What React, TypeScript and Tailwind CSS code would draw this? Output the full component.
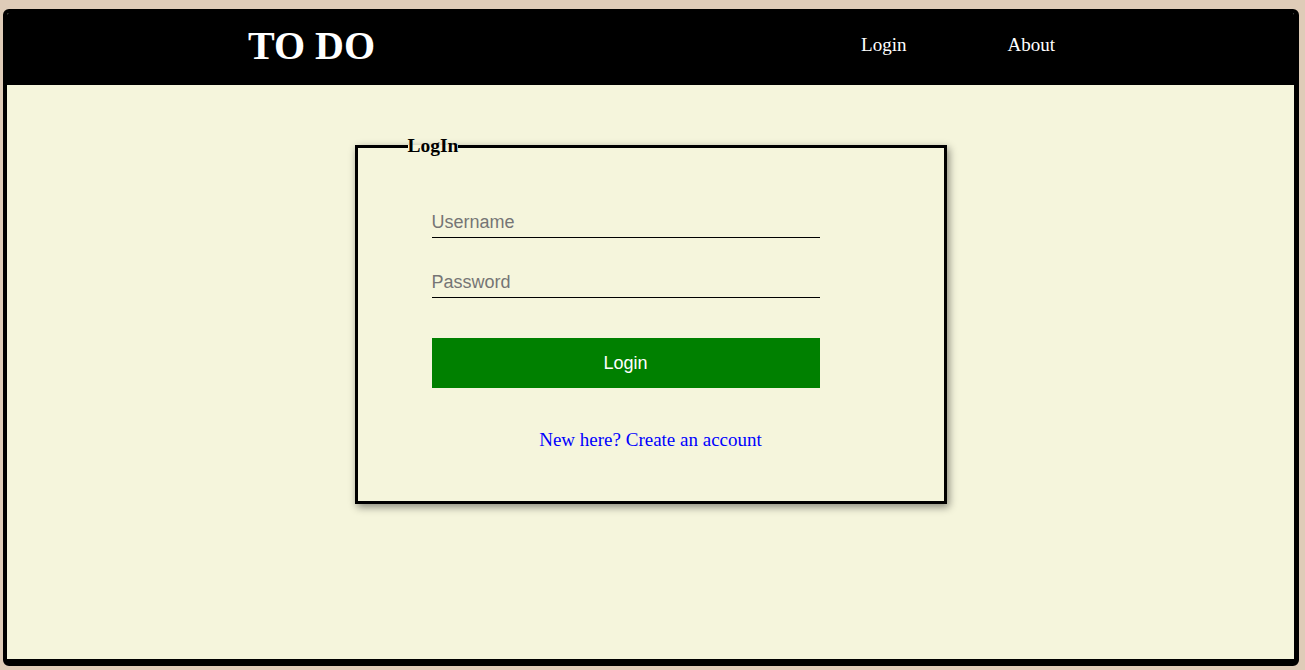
import React from "react";

const App = () => {
  return (
    <div className="h-[670px] bg-[#dfccb8] pt-[9px] pl-[3px] pr-[6px] pb-[4px]">
      <div className="flex h-full flex-col overflow-hidden rounded-[6px] border-t-4 border-l-4 border-r-[5px] border-b-[7px] border-black bg-[#f5f5dc] font-['Liberation_Serif',serif]">
        <header className="flex h-[72px] shrink-0 items-center justify-between bg-black pl-[241px] pr-[239px] pb-[6px]">
          <h1 className="text-[40px] font-bold text-white">TO DO</h1>
          <nav className="mb-[2px] flex gap-[101px] text-[19px] text-white">
            <a href="#">Login</a>
            <a href="#">About</a>
          </nav>
        </header>

        <main className="flex-1">
          <fieldset className="mx-auto mt-[50px] h-[369px] w-[592px] border-[3px] border-black shadow-[2px_3px_8px_rgba(0,0,0,0.45)]">
            <legend className="ml-[50px] text-[19.5px] font-bold leading-[22px] text-black">
              LogIn
            </legend>
            <form className="flex w-[462px] flex-col pl-[74px] pt-[51px] font-['Liberation_Sans',Arial,sans-serif]">
              <input
                type="text"
                placeholder="Username"
                className="h-[30px] w-[388px] border-b border-black bg-transparent text-[18px] outline-none placeholder:text-[#757575]"
              />
              <input
                type="password"
                placeholder="Password"
                className="mt-[30px] h-[30px] w-[388px] border-b border-black bg-transparent text-[18px] outline-none placeholder:text-[#757575]"
              />
              <button
                type="button"
                className="mt-[40px] h-[50px] w-[388px] bg-[#008000] text-[18px] text-white"
              >
                Login
              </button>
            </form>
            <div className="mt-[41px] text-center font-['Liberation_Serif',serif] text-[19px] leading-[22px]">
              <a href="#" className="text-[#0000ff]">
                New here? Create an account
              </a>
            </div>
          </fieldset>
        </main>
      </div>
    </div>
  );
};

export default App;
